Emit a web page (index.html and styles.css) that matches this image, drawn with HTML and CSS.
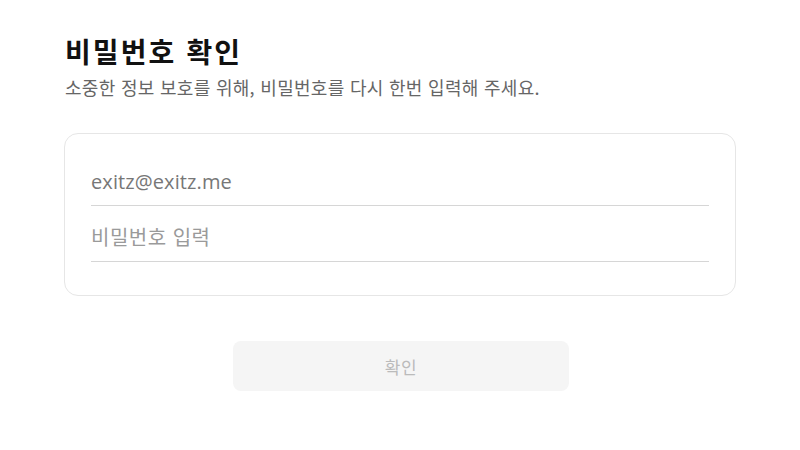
FILE: index.html
```html
<!DOCTYPE html>
<html lang="ko">
<head>
<meta charset="utf-8">
<link rel="stylesheet" href="styles.css">
</head>
<body>
<main class="wrap">
  <h1 class="title">비밀번호 확인</h1>
  <p class="desc">소중한 정보 보호를 위해, 비밀번호를 다시 한번 입력해 주세요.</p>
  <section class="card">
    <div class="field"><input class="input" type="text" value="exitz@exitz.me"></div>
    <div class="field"><input class="input" type="password" placeholder="비밀번호 입력"></div>
  </section>
  <div class="actions">
    <button class="btn" disabled>확인</button>
  </div>
</main>
</body>
</html>
```
FILE: styles.css
```css
* { box-sizing: border-box; }
html, body { margin: 0; padding: 0; background: #fff; }
body { font-family: "Noto Sans CJK KR", "Noto Sans", sans-serif; color: #111; }
.wrap { width: 672px; margin: 0 auto; padding-top: 32px; }
.title { margin: 0 0 0 1px; font-size: 28px; font-weight: 700; line-height: 38px; color: #111; letter-spacing: 2.1px; }
.desc { margin: 5px 0 0 1px; font-size: 18px; line-height: 24px; color: #666; letter-spacing: 0.3px; }
.card { margin-top: 34px; border: 1px solid #e6e6e6; border-radius: 14px; padding: 16px 26px 33px 26px; }
.field { border-bottom: 1px solid #d6d6d6; height: 56px; display: flex; align-items: flex-end; }
.input { width: 100%; border: 0; outline: 0; padding: 0 0 10px; font-family: "Open Sans", "Noto Sans CJK KR", sans-serif; font-size: 20px; color: #777; background: transparent; line-height: 26px; letter-spacing: 0.1px; }
.input::placeholder { color: #9a9a9a; font-family: "Noto Sans CJK KR", sans-serif; letter-spacing: 0.5px; }
.actions { display: flex; justify-content: center; margin-top: 45px; padding-left: 2px; }
.btn { width: 336px; height: 50px; border: 0; border-radius: 8px; background: #f5f5f5; color: #bbb; font-family: "Noto Sans CJK KR", sans-serif; font-size: 17px; letter-spacing: 0.5px; }
```
